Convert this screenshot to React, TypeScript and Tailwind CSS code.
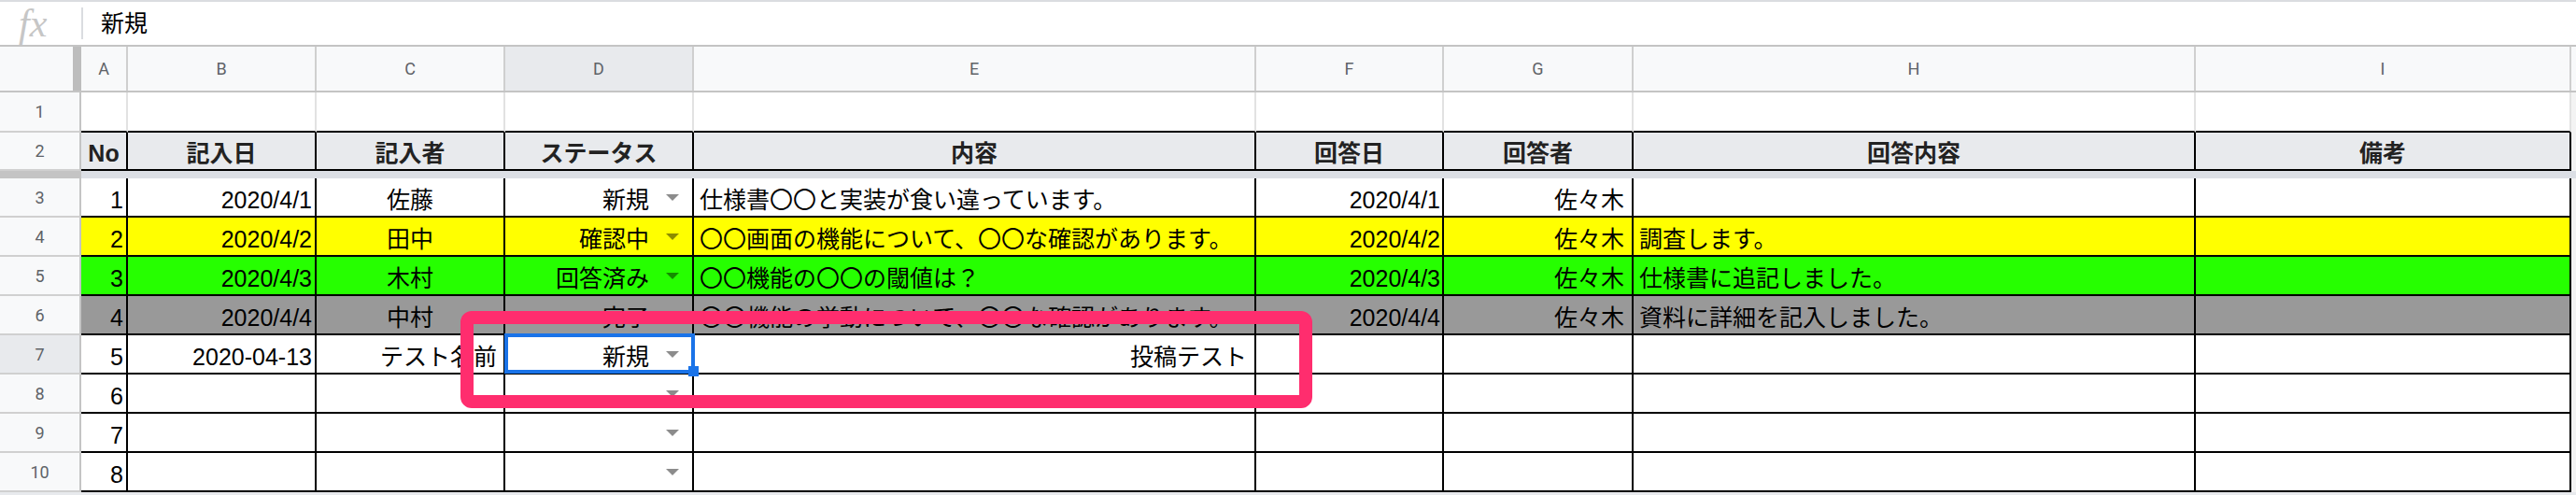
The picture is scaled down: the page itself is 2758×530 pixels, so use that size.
import React from "react";

const FONT = "font-['Liberation_Sans','Noto_Sans_CJK_JP',sans-serif]";

/** Column widths for A..I, written out so Tailwind picks them up. */
const colWidths = [
  "w-[50px]",
  "w-[202px]",
  "w-[202px]",
  "w-[202px]",
  "w-[602px]",
  "w-[201px]",
  "w-[203px]",
  "w-[602px]",
  "w-[402px]",
];

const letters = ["A", "B", "C", "D", "E", "F", "G", "H", "I"];

const headers = ["No", "記入日", "記入者", "ステータス", "内容", "回答日", "回答者", "回答内容", "備考"];

interface DataRow {
  rowNo: number;
  no: string;
  date: string;
  name: string;
  status: string;
  content: string;
  answerDate: string;
  answerer: string;
  answer: string;
  bg: string;
  nameRight?: boolean;
  contentRight?: boolean;
}

const rows: DataRow[] = [
  { rowNo: 3, no: "1", date: "2020/4/1", name: "佐藤", status: "新規", content: "仕様書〇〇と実装が食い違っています。", answerDate: "2020/4/1", answerer: "佐々木", answer: "", bg: "bg-white" },
  { rowNo: 4, no: "2", date: "2020/4/2", name: "田中", status: "確認中", content: "〇〇画面の機能について、〇〇な確認があります。", answerDate: "2020/4/2", answerer: "佐々木", answer: "調査します。", bg: "bg-[#ffff00]" },
  { rowNo: 5, no: "3", date: "2020/4/3", name: "木村", status: "回答済み", content: "〇〇機能の〇〇の閾値は？", answerDate: "2020/4/3", answerer: "佐々木", answer: "仕様書に追記しました。", bg: "bg-[#26ff00]" },
  { rowNo: 6, no: "4", date: "2020/4/4", name: "中村", status: "完了", content: "〇〇機能の挙動について、〇〇な確認があります。", answerDate: "2020/4/4", answerer: "佐々木", answer: "資料に詳細を記入しました。", bg: "bg-[#999999]" },
  { rowNo: 7, no: "5", date: "2020-04-13", name: "テスト名前", status: "新規", content: "投稿テスト", answerDate: "", answerer: "", answer: "", bg: "bg-white", nameRight: true, contentRight: true },
  { rowNo: 8, no: "6", date: "", name: "", status: "", content: "", answerDate: "", answerer: "", answer: "", bg: "bg-white" },
  { rowNo: 9, no: "7", date: "", name: "", status: "", content: "", answerDate: "", answerer: "", answer: "", bg: "bg-white" },
  { rowNo: 10, no: "8", date: "", name: "", status: "", content: "", answerDate: "", answerer: "", answer: "", bg: "bg-white" },
];

function RowHead({ n, active, className = "" }: { n?: number; active?: boolean; className?: string }) {
  return (
    <div
      className={`w-[87px] shrink-0 flex items-center justify-center border-r-2 border-r-[#c4c4c4] border-b-2 border-b-[#d0d0d0] font-['Roboto',sans-serif] text-[18px] text-[#5f6368] ${
        active ? "bg-[#e8eaed]" : "bg-[#f8f9fa]"
      } ${className}`}
    >
      {n}
    </div>
  );
}

function Cell({
  width,
  align,
  children,
  className = "",
}: {
  width: string;
  align: "left" | "right" | "center";
  children?: React.ReactNode;
  className?: string;
}) {
  const justify =
    align === "left" ? "justify-start" : align === "right" ? "justify-end" : "justify-center";
  return (
    <div
      className={`${width} shrink-0 relative flex items-end pb-[2px] ${justify} border-r-2 border-b-2 border-black overflow-hidden whitespace-nowrap leading-[30px] ${className}`}
    >
      {children}
    </div>
  );
}

function Caret() {
  return (
    <span className="absolute right-[14px] top-[17px] w-0 h-0 border-l-[7px] border-r-[7px] border-t-[7px] border-l-transparent border-r-transparent border-t-black/45" />
  );
}

export default function App() {
  return (
    <div className={`relative w-[2758px] h-[530px] overflow-hidden bg-white text-black text-[25px] ${FONT}`}>
      {/* formula bar */}
      <div className="flex h-[50px] border-t-2 border-t-[#dadce0] border-b-2 border-b-[#c4c4c4] bg-white">
        <div className="w-[87px] shrink-0 flex items-center pl-[20px]">
          <span className="font-['Liberation_Serif',serif] italic text-[42px] leading-none text-[#c6c6c6]">
            fx
          </span>
        </div>
        <div className="w-[2px] my-[6px] bg-[#dadce0]" />
        <div className="flex items-center pl-[19px] leading-none">新規</div>
      </div>

      {/* column letters */}
      <div className="flex h-[49px] bg-[#f8f9fa] border-b-2 border-[#c4c4c4] font-['Roboto',sans-serif] text-[18px] text-[#5f6368]">
        <div className="w-[87px] shrink-0 border-r-[9px] border-[#bdbdbd]" />
        {letters.map((l, i) => (
          <div
            key={l}
            className={`${colWidths[i]} shrink-0 flex items-center justify-center border-r-2 border-[#cfcfcf] ${
              l === "D" ? "bg-[#e8eaed]" : ""
            }`}
          >
            {l}
          </div>
        ))}
        <div className="flex-1" />
      </div>

      {/* row 1 */}
      <div className="flex h-[43px]">
        <RowHead n={1} />
        {colWidths.map((w, i) => (
          <div key={i} className={`${w} shrink-0 border-r-2 border-r-[#e2e2e2] border-b-2 border-b-black`} />
        ))}
        <div className="flex-1 bg-[#f3f3f3]" />
      </div>

      {/* row 2: table header */}
      <div className="flex h-[41px]">
        <RowHead n={2} className="border-b-0" />
        {headers.map((h, i) => (
          <Cell key={h} width={colWidths[i]} align="center" className="bg-[#e8eaed] font-bold text-[#222]">
            {h}
          </Cell>
        ))}
        <div className="flex-1 bg-[#f3f3f3]" />
      </div>

      {/* frozen divider */}
      <div className="flex h-[8px]">
        <div className="w-[87px] shrink-0 bg-[#c4c4c4]" />
        <div className="flex-1 bg-[#dcdfe5]" />
      </div>

      {rows.map((r) => (
        <div key={r.rowNo} className="flex h-[42px]">
          <RowHead n={r.rowNo} active={r.rowNo === 7} />
          <Cell width={colWidths[0]} align="right" className={`${r.bg} pr-[3px]`}>
            {r.no}
          </Cell>
          <Cell width={colWidths[1]} align="right" className={`${r.bg} pr-[3px]`}>
            {r.date}
          </Cell>
          <Cell
            width={colWidths[2]}
            align={r.nameRight ? "right" : "center"}
            className={`${r.bg} ${r.nameRight ? "pr-[7px] overflow-visible" : ""}`}
          >
            {r.name}
          </Cell>
          <Cell width={colWidths[3]} align="right" className={`${r.bg} pr-[46px]`}>
            {r.status}
            <Caret />
          </Cell>
          <Cell
            width={colWidths[4]}
            align={r.contentRight ? "right" : "left"}
            className={`${r.bg} ${r.contentRight ? "pr-[8px]" : "pl-[6px]"}`}
          >
            {r.content}
          </Cell>
          <Cell width={colWidths[5]} align="right" className={`${r.bg} pr-[2px]`}>
            {r.answerDate}
          </Cell>
          <Cell width={colWidths[6]} align="right" className={`${r.bg} pr-[8px]`}>
            {r.answerer}
          </Cell>
          <Cell width={colWidths[7]} align="left" className={`${r.bg} pl-[6px]`}>
            {r.answer}
          </Cell>
          <Cell width={colWidths[8]} align="left" className={r.bg} />
          <div className="flex-1 bg-[#f3f3f3]" />
        </div>
      ))}
      <div className="h-[3px] bg-[#e8eaed]" />

      {/* selected cell D7 */}
      <div className="absolute left-[540px] top-[357px] w-[204px] h-[43px] border-[4px] border-[#1a73e8]" />
      <div className="absolute left-[737px] top-[392px] w-[11px] h-[11px] bg-[#1a73e8]" />

      {/* annotation box */}
      <div className="absolute left-[493px] top-[333px] w-[912px] h-[104px] border-[14px] border-[#ff2d6e] rounded-[12px]" />
    </div>
  );
}
